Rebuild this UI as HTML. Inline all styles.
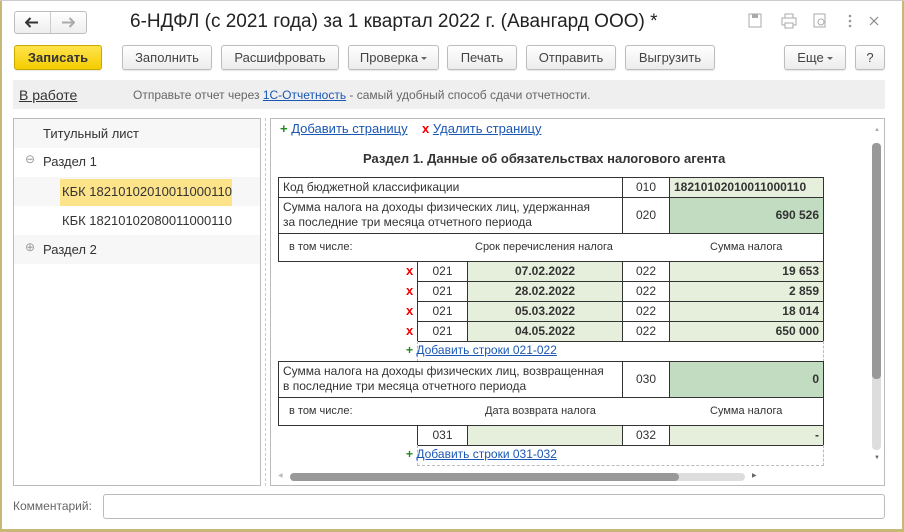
<!DOCTYPE html><html><head><meta charset="utf-8"><style>
*{box-sizing:border-box;margin:0;padding:0}
body{width:904px;height:532px;background:#fff;font-family:"Liberation Sans",Arial,sans-serif;font-size:13px;color:#333;position:relative;overflow:hidden}
.a{position:absolute}
.btn{position:absolute;top:45px;height:25px;border:1px solid #bdbdbd;border-radius:3px;background:linear-gradient(#fff,#ececec);text-align:center;line-height:23px;color:#444;font-size:13px;box-shadow:0 1px 1px rgba(0,0,0,.1)}
.c{position:absolute;border:1px solid #333;font-size:12px;line-height:18px;padding:0 4px}
.g{background:#e6efdc}.g2{background:#c1dcc0}
.b{font-weight:bold;text-align:right}
.ctr{text-align:center}
.x{position:absolute;color:#e00;font-weight:bold;font-size:13px}
.lk{color:#1a57b5;text-decoration:underline}
.pl{color:#1c8a1c;font-weight:bold}
.dd{display:inline-block;width:0;height:0;border-left:3px solid transparent;border-right:3px solid transparent;border-top:3px solid #666;vertical-align:middle;margin-left:3px}
</style></head><body>
<div class="a" style="left:0;top:0;width:2px;height:532px;background:#c8b878"></div>
<div class="a" style="left:902px;top:0;width:2px;height:532px;background:#c8b878"></div>
<div class="a" style="left:0;top:529px;width:904px;height:3px;background:#c8b878"></div>
<div class="a" style="left:0;top:0;width:904px;height:1px;background:#ccc"></div>
<!-- nav -->
<div class="a" style="left:14px;top:11px;width:73px;height:23px;border:1px solid #bdbdbd;border-radius:3px;background:linear-gradient(#fff,#eee)"></div>
<div class="a" style="left:50px;top:12px;width:1px;height:21px;background:#ccc"></div>
<svg class="a" style="left:25px;top:17px" width="14" height="12"><path d="M1 5.5H13M5.5 1L1 5.5L5.5 10" stroke="#333" stroke-width="2" fill="none"/></svg>
<svg class="a" style="left:61px;top:17px" width="14" height="12"><path d="M1 5.5H13M8.5 1L13 5.5L8.5 10" stroke="#aaa" stroke-width="2" fill="none"/></svg>
<div class="a" style="left:130px;top:11px;font-size:19px;color:#222">6-НДФЛ (с 2021 года) за 1 квартал 2022 г. (Авангард ООО) *</div>
<svg class="a" style="left:748px;top:13px" width="140" height="16"><rect x="1" y="1" width="12" height="13" fill="none" stroke="#aaa"/><rect x="4" y="1" width="6" height="4" fill="#aaa"/><rect x="34" y="5" width="14" height="7" fill="none" stroke="#aaa"/><rect x="37" y="1" width="8" height="4" fill="none" stroke="#aaa"/><rect x="37" y="10" width="8" height="5" fill="#fff" stroke="#aaa"/><path d="M66 1H77V14H66Z" fill="none" stroke="#aaa"/><circle cx="73" cy="9" r="3" fill="none" stroke="#aaa"/><circle cx="102" cy="3" r="1.3" fill="#999"/><circle cx="102" cy="8" r="1.3" fill="#999"/><circle cx="102" cy="13" r="1.3" fill="#999"/><path d="M122 4L130 12M130 4L122 12" stroke="#888" stroke-width="1.2"/></svg>
<!-- toolbar -->
<div class="btn" style="left:14px;width:88px;background:linear-gradient(#ffe34d,#f4cd00);border-color:#c9a800;color:#333;font-weight:bold">Записать</div>
<div class="btn" style="left:122px;width:90px">Заполнить</div>
<div class="btn" style="left:221px;width:118px">Расшифровать</div>
<div class="btn" style="left:348px;width:91px">Проверка<span class="dd"></span></div>
<div class="btn" style="left:447px;width:70px">Печать</div>
<div class="btn" style="left:526px;width:90px">Отправить</div>
<div class="btn" style="left:625px;width:90px">Выгрузить</div>
<div class="btn" style="left:784px;width:62px">Еще<span class="dd"></span></div>
<div class="btn" style="left:855px;width:30px">?</div>
<!-- info -->
<div class="a" style="left:13px;top:80px;width:872px;height:29px;background:#efefef"></div>
<div class="a" style="left:19px;top:87px;font-size:14px;color:#333;text-decoration:underline">В работе</div>
<div class="a" style="left:133px;top:88px;font-size:12px;color:#666">Отправьте отчет через <span class="lk">1С-Отчетность</span> - самый удобный способ сдачи отчетности.</div>
<!-- left panel -->
<div class="a" style="left:13px;top:118px;width:248px;height:368px;border:1px solid #bbb"></div>
<div class="a" style="left:14px;top:119px;width:246px;height:29px;background:#f7f7f7"></div>
<div class="a" style="left:14px;top:177px;width:246px;height:29px;background:#f7f7f7"></div>
<div class="a" style="left:14px;top:235px;width:246px;height:29px;background:#f7f7f7"></div>
<div class="a" style="left:60px;top:179px;width:172px;height:27px;background:#fde38a"></div>
<div class="a" style="left:43px;top:126px;color:#333">Титульный лист</div>
<div class="a" style="left:25px;top:152px;color:#999;font-size:12px">⊖</div>
<div class="a" style="left:43px;top:154px;color:#333">Раздел 1</div>
<div class="a" style="left:62px;top:184px;color:#333">КБК 18210102010011000110</div>
<div class="a" style="left:62px;top:213px;color:#333">КБК 18210102080011000110</div>
<div class="a" style="left:25px;top:240px;color:#999;font-size:12px">⊕</div>
<div class="a" style="left:43px;top:242px;color:#333">Раздел 2</div>
<div class="a" style="left:265px;top:118px;height:368px;border-left:1px dashed #ccc"></div>
<!-- right panel -->
<div class="a" style="left:270px;top:118px;width:615px;height:368px;border:1px solid #bbb"></div>
<div class="a" style="left:280px;top:121px"><span class="pl">+</span> <span class="lk">Добавить страницу</span> &nbsp;&nbsp;&nbsp;<span style="color:#e00;font-weight:bold">x</span> <span class="lk">Удалить страницу</span></div>
<div class="a" style="left:363px;top:151px;font-weight:bold;font-size:13px;color:#333">Раздел 1. Данные об обязательствах налогового агента</div>
<!-- table -->
<div class="c" style="left:278px;top:177px;width:345px;height:21px">Код бюджетной классификации</div>
<div class="c ctr" style="left:622px;top:177px;width:48px;height:21px">010</div>
<div class="c g" style="left:669px;top:177px;width:155px;height:21px;font-weight:bold">18210102010011000110</div>
<div class="c" style="left:278px;top:197px;width:345px;height:37px;line-height:15px;padding-top:2px">Сумма налога на доходы физических лиц, удержанная<br>за последние три месяца отчетного периода</div>
<div class="c ctr" style="left:622px;top:197px;width:48px;height:37px;line-height:35px">020</div>
<div class="c g2 b" style="left:669px;top:197px;width:155px;height:37px;line-height:35px">690 526</div>
<div class="c" style="left:278px;top:233px;width:546px;height:29px;line-height:27px;font-size:11px;padding-left:10px">в том числе:</div>
<div class="a" style="left:475px;top:241px;font-size:11px">Срок перечисления налога</div>
<div class="a" style="left:710px;top:241px;font-size:11px">Сумма налога</div>
<div class="x" style="left:406px;top:263px">x</div><div class="x" style="left:406px;top:283px">x</div><div class="x" style="left:406px;top:303px">x</div><div class="x" style="left:406px;top:323px">x</div>
<div class="c ctr" style="left:417px;top:261px;width:51px;height:21px">021</div><div class="c g ctr" style="left:467px;top:261px;width:156px;height:21px;font-weight:bold">07.02.2022</div><div class="c ctr" style="left:622px;top:261px;width:48px;height:21px">022</div><div class="c g b" style="left:669px;top:261px;width:155px;height:21px">19 653</div>
<div class="c ctr" style="left:417px;top:281px;width:51px;height:21px">021</div><div class="c g ctr" style="left:467px;top:281px;width:156px;height:21px;font-weight:bold">28.02.2022</div><div class="c ctr" style="left:622px;top:281px;width:48px;height:21px">022</div><div class="c g b" style="left:669px;top:281px;width:155px;height:21px">2 859</div>
<div class="c ctr" style="left:417px;top:301px;width:51px;height:21px">021</div><div class="c g ctr" style="left:467px;top:301px;width:156px;height:21px;font-weight:bold">05.03.2022</div><div class="c ctr" style="left:622px;top:301px;width:48px;height:21px">022</div><div class="c g b" style="left:669px;top:301px;width:155px;height:21px">18 014</div>
<div class="c ctr" style="left:417px;top:321px;width:51px;height:21px">021</div><div class="c g ctr" style="left:467px;top:321px;width:156px;height:21px;font-weight:bold">04.05.2022</div><div class="c ctr" style="left:622px;top:321px;width:48px;height:21px">022</div><div class="c g b" style="left:669px;top:321px;width:155px;height:21px">650 000</div>
<div class="a" style="left:417px;top:341px;width:407px;height:21px;border:1px dashed #bbb;border-top:none"></div>
<div class="a" style="left:406px;top:343px;font-size:12px"><span class="pl">+</span> <span class="lk">Добавить строки 021-022</span></div>
<div class="c" style="left:278px;top:361px;width:345px;height:37px;line-height:15px;padding-top:2px">Сумма налога на доходы физических лиц, возвращенная<br>в последние три месяца отчетного периода</div>
<div class="c ctr" style="left:622px;top:361px;width:48px;height:37px;line-height:35px">030</div>
<div class="c g2 b" style="left:669px;top:361px;width:155px;height:37px;line-height:35px">0</div>
<div class="c" style="left:278px;top:397px;width:546px;height:29px;line-height:27px;font-size:11px;padding-left:10px">в том числе:</div>
<div class="a" style="left:485px;top:405px;font-size:11px">Дата возврата налога</div>
<div class="a" style="left:710px;top:405px;font-size:11px">Сумма налога</div>
<div class="c ctr" style="left:417px;top:425px;width:51px;height:21px">031</div><div class="c g" style="left:467px;top:425px;width:156px;height:21px"></div><div class="c ctr" style="left:622px;top:425px;width:48px;height:21px">032</div><div class="c g b" style="left:669px;top:425px;width:155px;height:21px">-</div>
<div class="a" style="left:417px;top:445px;width:407px;height:21px;border:1px dashed #bbb;border-top:none"></div>
<div class="a" style="left:406px;top:447px;font-size:12px"><span class="pl">+</span> <span class="lk">Добавить строки 031-032</span></div>
<!-- scrollbars -->
<div class="a" style="left:872px;top:143px;width:9px;height:307px;background:#ddd;border-radius:4px"></div>
<div class="a" style="left:872px;top:143px;width:9px;height:236px;background:#999;border-radius:4px"></div>
<div class="a" style="left:874px;top:127px;font-size:6px;color:#aaa">▲</div>
<div class="a" style="left:874px;top:455px;font-size:6px;color:#666">▼</div>
<div class="a" style="left:290px;top:473px;width:455px;height:8px;background:#ddd;border-radius:4px"></div>
<div class="a" style="left:290px;top:473px;width:389px;height:8px;background:#999;border-radius:4px"></div>
<div class="a" style="left:278px;top:472px;font-size:6px;color:#bbb">◀</div>
<div class="a" style="left:752px;top:472px;font-size:6px;color:#666">▶</div>
<!-- comment -->
<div class="a" style="left:13px;top:499px;color:#666;font-size:12px">Комментарий:</div>
<div class="a" style="left:103px;top:494px;width:782px;height:25px;border:1px solid #bbb;border-radius:3px"></div>
</body></html>
